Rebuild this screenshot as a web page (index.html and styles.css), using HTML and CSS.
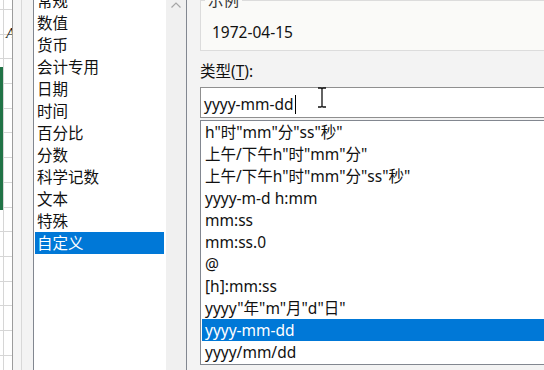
FILE: index.html
```html
<!DOCTYPE html>
<html lang="zh-CN">
<head>
<meta charset="utf-8">
<title>设置单元格格式</title>
<link rel="stylesheet" href="styles.css">
</head>
<body>
<div class="screen">
  <div class="sheet">
    <div class="sheet-mark">A</div>
    <div class="sheet-sel"></div>
  </div>
  <div class="gutter"></div>
  <div class="dialog">
    <div class="cat-box">
      <ul class="cat-list">
        <li>常规</li>
        <li>数值</li>
        <li>货币</li>
        <li>会计专用</li>
        <li>日期</li>
        <li>时间</li>
        <li>百分比</li>
        <li>分数</li>
        <li>科学记数</li>
        <li>文本</li>
        <li>特殊</li>
        <li class="sel">自定义</li>
      </ul>
      <div class="vscroll">
        <svg class="arrow-up" width="10" height="6" viewBox="0 0 10 6"><path d="M0.5 5.5 L5 1 L9.5 5.5" fill="none" stroke="#a6a6a6" stroke-width="1.2"/></svg>
      </div>
    </div>
    <div class="right">
      <fieldset class="sample">
        <legend>示例</legend>
        <div class="sample-val">1972-04-15</div>
      </fieldset>
      <div class="type-label">类型(<u>T</u>):</div>
      <div class="type-input">
        <span class="type-text">yyyy-mm-dd</span><span class="caret"></span>
        <svg class="ibeam" width="10" height="21" viewBox="0 0 10 21"><path d="M1 1 H4 Q5 1 5 2.5 V18.5 Q5 20 4 20 H1 M9 1 H6 Q5 1 5 2.5 M5 18.5 Q5 20 6 20 H9" fill="none" stroke="#111" stroke-width="1.3"/></svg>
      </div>
      <ul class="fmt-list">
        <li>h"时"mm"分"ss"秒"</li>
        <li>上午/下午h"时"mm"分"</li>
        <li>上午/下午h"时"mm"分"ss"秒"</li>
        <li>yyyy-m-d h:mm</li>
        <li>mm:ss</li>
        <li>mm:ss.0</li>
        <li>@</li>
        <li>[h]:mm:ss</li>
        <li>yyyy"年"m"月"d"日"</li>
        <li class="sel">yyyy-mm-dd</li>
        <li>yyyy/mm/dd</li>
      </ul>
    </div>
  </div>
</div>
</body>
</html>
```

FILE: styles.css
```css
* { box-sizing: border-box; }
html, body { margin: 0; padding: 0; }
body {
  width: 544px;
  height: 370px;
  overflow: hidden;
  background: #f2f2f2;
  font-family: "Noto Sans", "Noto Sans CJK SC", sans-serif;
  font-size: 15.5px;
  color: #111;
}
.screen {
  display: flex;
  width: 544px;
  height: 370px;
  overflow: hidden;
}
.sheet {
  width: 13px;
  flex: none;
  border-right: 1px solid #9c9c9c;
  background-color: #fff;
  background-image:
    linear-gradient(to right, transparent 3px, #d6d6d6 3px, #d6d6d6 4px, transparent 4px),
    repeating-linear-gradient(to bottom, transparent 0, transparent 9px, #d6d6d6 9px, #d6d6d6 10px, transparent 10px, transparent 24.7px);
  padding-top: 26px;
}
.sheet-mark {
  font-family: "Liberation Serif", serif;
  font-style: italic;
  font-size: 15px;
  line-height: 15px;
  color: #222;
  padding-left: 6px;
  height: 15px;
  overflow: hidden;
}
.sheet-sel {
  margin-top: 26px;
  height: 143px;
  width: 3px;
  background: #217346;
}
.gutter {
  width: 9px;
  flex: none;
  background: #f5f5f5;
  border-right: 1px solid #d8d8d8;
}
.dialog {
  flex: 1;
  display: flex;
  align-items: flex-start;
  padding-left: 11px;
  background: #f3f3f3;
  min-width: 0;
}
.cat-box {
  width: 154px;
  flex: none;
  height: 420px;
  margin-top: -12px;
  display: flex;
  border: 1px solid #828790;
  background: #fff;
}
.cat-list {
  list-style: none;
  margin: 0;
  padding: 1px 2px 1px 1px;
  width: 132px;
  flex: none;
}
.cat-list li, .fmt-list li {
  height: 22px;
  line-height: 22px;
  padding-left: 2px;
  white-space: nowrap;
}
.cat-list li.sel, .fmt-list li.sel {
  background: #0078d7;
  color: #fff;
}
.vscroll {
  width: 20px;
  flex: none;
  background: #f0f0f0;
  display: flex;
  justify-content: center;
  align-items: flex-start;
}
.arrow-up {
  margin-top: 13px;
  display: block;
}
.right {
  flex: 1;
  margin-left: 13px;
  min-width: 0;
  margin-top: -9px;
}
.sample {
  margin: 0 -40px 0 0;
  padding: 0 11px 7px;
  border: 1px solid #dcdcdc;
  background: #fafaf8;
  min-width: 0;
}
.sample legend {
  padding: 0 3px;
  margin-left: -7px;
  line-height: 18px;
  color: #333;
}
.sample-val {
  line-height: 22px;
  margin-top: 12px;
}
.type-label {
  line-height: 22px;
  margin-top: 9px;
}
.type-label u { text-underline-offset: 2px; }
.type-input {
  position: relative;
  margin-top: 5px;
  margin-right: -40px;
  height: 31px;
  border: 1px solid #8f8f8f;
  background: #fff;
  padding: 3px 3px 0;
  line-height: 22px;
  display: flex;
  align-items: center;
  white-space: nowrap;
}
.type-text { line-height: 22px; }
.caret {
  display: inline-block;
  width: 1px;
  height: 19px;
  background: #000;
  margin-left: 1px;
}
.ibeam {
  position: absolute;
  left: 116px;
  top: -1px;
}
.fmt-list {
  list-style: none;
  margin: 2px -40px 0 0;
  padding: 0 0 1px 1px;
  border: 1px solid #828790;
  background: #fff;
}
.fmt-list li { padding-left: 3px; }
```
